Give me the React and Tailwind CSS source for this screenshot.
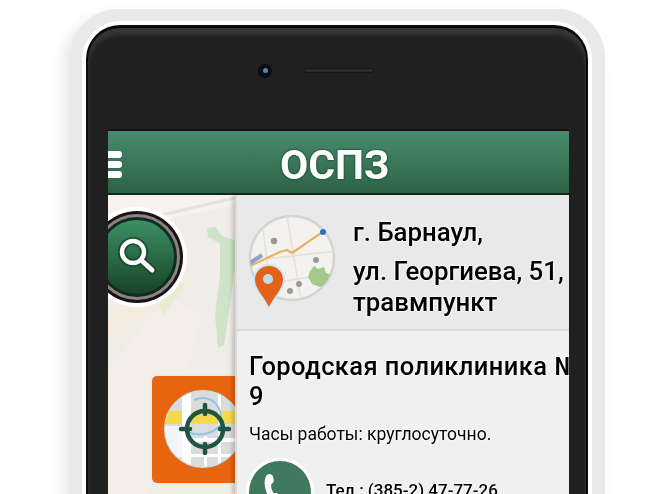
import React from "react";

const halo = "[text-shadow:0_0_2px_#fff,0_0_2px_#fff,0_0_3px_#fff]";

function MapBackground() {
  return (
    <svg className="absolute inset-0 w-full h-full" viewBox="0 0 127 299" preserveAspectRatio="none">
      <rect width="127" height="299" fill="#f0ece7" />
      <path d="M0 0H127V10L50 26H0Z" fill="#f6f3ef" />
      <path d="M45 22L127 3" stroke="#e2e4dd" strokeWidth="3" fill="none" />
      <path d="M60 50L72 58L60 105L30 125L0 150V120Z" fill="#f6ebe0" />
      <path d="M0 175L60 100L95 120L40 299H0Z" fill="#f5efe9" opacity="0.8" />
      <path d="M99 33L108 32L113 40L127 45V70L122 110L116 150L110 152L107 120L112 80L112 48L100 42Z" fill="#cfe3c8" />
      <path d="M50 110L70 85L78 90L56 120Z" fill="#e8ecd2" />
    </svg>
  );
}

function TargetTile() {
  return (
    <div className="absolute left-[44px] top-[181px] w-[100px] h-[107px] rounded-[5px] bg-[#e8650f] shadow-[0_0_2px_#bfe6f5]">
      <svg className="w-full h-full" viewBox="0 0 100 107">
        <defs>
          <clipPath id="tileclip"><circle cx="51" cy="53" r="38" /></clipPath>
        </defs>
        <circle cx="51" cy="53" r="40" fill="#f7650a" />
        <circle cx="51" cy="53" r="38" fill="#dcdcdc" stroke="#bfe6f5" strokeWidth="2" />
        <g clipPath="url(#tileclip)">
          <rect x="10" y="35" width="82" height="13" fill="#f4d94f" />
          <rect x="30" y="10" width="9" height="90" fill="#fff" />
          <rect x="10" y="62" width="82" height="4" fill="#fff" />
          <rect x="10" y="78" width="82" height="3" fill="#fff" />
          <rect x="52" y="60" width="3" height="40" fill="#fff" />
          <rect x="66" y="15" width="3" height="80" fill="#fff" />
          <rect x="12" y="50" width="18" height="30" fill="#f2f6fa" />
          <path d="M42 24C62 16 72 36 68 44" stroke="#8fc4e6" strokeWidth="2" fill="none" />
          <path d="M36 56C50 62 66 56 72 44" stroke="#8fc4e6" strokeWidth="2" fill="none" />
        </g>
        <g stroke="#1f5542" fill="none">
          <circle cx="53" cy="53" r="18" strokeWidth="4.5" />
          <path d="M53 29V38M53 68V77M29 53H38M68 53H77" strokeWidth="4.5" strokeLinecap="round" />
        </g>
      </svg>
    </div>
  );
}

function SearchButton() {
  return (
    <div className="absolute left-[-21px] top-[12px] w-[100px] h-[100px] rounded-full bg-white p-[4px]">
      <div className="w-full h-full rounded-full bg-[#1a1214] p-[3px]">
        <div className="w-full h-full rounded-full bg-[#8d8385] p-[3px]">
          <div className="w-full h-full rounded-full bg-gradient-to-b from-[#3c9064] via-[#2a6a46] to-[#184429] border-[3px] border-[#0f2c1e] flex items-center justify-center">
            <svg width="44" height="44" viewBox="0 0 44 44" className="mt-[-2px]">
              <circle cx="18" cy="18" r="11" fill="none" stroke="#0e3322" strokeWidth="8" opacity="0.6" />
              <path d="M26 26L37 36" stroke="#0e3322" strokeWidth="8" strokeLinecap="round" opacity="0.6" />
              <circle cx="18" cy="18" r="11" fill="none" stroke="#fff" strokeWidth="4.5" />
              <path d="M26 26L37 36" stroke="#fff" strokeWidth="5" strokeLinecap="round" />
            </svg>
          </div>
        </div>
      </div>
    </div>
  );
}

function MiniMap() {
  return (
    <svg width="96" height="100" viewBox="0 0 96 100" className="shrink-0">
      <defs>
        <clipPath id="miniclip"><circle cx="50" cy="47" r="42" /></clipPath>
      </defs>
      <circle cx="50" cy="47" r="42" fill="#f4f2ee" stroke="#d3d3d1" strokeWidth="2.5" />
      <g clipPath="url(#miniclip)">
        <path d="M20 10L30 90M45 5L60 95M5 50L95 40M10 75L95 62" stroke="#eadfd6" strokeWidth="1.5" fill="none" />
        <path d="M8 55L38 41L45 39L50 42L82 20L92 17" stroke="#e9b35a" strokeWidth="2.2" fill="none" />
        <path d="M8 52L20 44" stroke="#8aa3c8" strokeWidth="4" fill="none" />
        <path d="M68 60L72 55L76 58L82 56L84 62L90 64L86 72L78 76L70 73L66 66Z" fill="#a5c98a" />
      </g>
      <circle cx="81" cy="21" r="3" fill="#2a6fd0" />
      <circle cx="32" cy="30" r="3.2" fill="#9a9a9a" />
      <circle cx="74" cy="49" r="3" fill="#9a9a9a" />
      <circle cx="57" cy="73" r="3" fill="#9a9a9a" />
      <circle cx="48" cy="80" r="3" fill="#9a9a9a" />
      <path d="M27 98C23 90 11 79 11 69C11 59 18 53 27 53C36 53 43 59 43 69C43 79 31 90 27 98Z" fill="#bfe6f5" opacity="0.7" />
      <path d="M27 96C24 88 13 78 13 69C13 61 19 55 27 55C35 55 41 61 41 69C41 78 30 88 27 96Z" fill="#e2621a" />
      <circle cx="26" cy="68" r="5" fill="#bfdde6" />
    </svg>
  );
}

export default function App() {
  return (
    <div className="w-[652px] h-[494px] overflow-hidden bg-white pl-[70px] pt-[9px] [font-family:Roboto,'Noto_Sans',sans-serif]">
      <div className="w-[535px] h-[620px] rounded-[48px] bg-[#e9e9e9] pt-[12px] pl-[12px] pr-[13px] shadow-[-6px_6px_14px_rgba(0,0,0,0.1)] blur-[0.6px]">
        <div className="w-full h-full rounded-[38px] bg-white pt-[4px] px-[4px]">
          <div className="w-full h-full rounded-[34px] bg-[#202020] border-2 border-t-[3px] border-[#0a0a0a] shadow-[inset_0_7px_4px_#363636] pl-[20px] pr-[17px]">
            <div className="h-[101px] flex items-center pl-[150px] pb-[16px] gap-[32px]">
              <div className="w-[14px] h-[14px] rounded-full bg-[#0c0c10] flex items-center justify-center">
                <div className="w-[5px] h-[5px] rounded-full bg-[#3f8fc4]" />
              </div>
              <div className="w-[70px] h-[5px] rounded-full bg-[#2a2a2a] border border-[#161616]" />
            </div>
            <div className="h-[400px] border-t-[2px] border-[#1a1015] overflow-hidden">
              <div className="h-[62px] flex items-center bg-gradient-to-b from-[#4a8b6d] to-[#2d6345] border-b-[2px] border-[#0e2a1a] box-content">
                <div className="w-[14px] flex flex-col gap-[3px] mt-[4px]">
                  <div className="h-[7px] rounded-r-[3px] bg-white shadow-[0_0_1px_#0d3a5a]" />
                  <div className="h-[7px] rounded-r-[3px] bg-white shadow-[0_0_1px_#0d3a5a]" />
                  <div className="h-[7px] rounded-r-[3px] bg-white shadow-[0_0_1px_#0d3a5a]" />
                </div>
                <div className="ml-[158px] mt-[6px] text-[41px] leading-none font-bold text-white [text-shadow:0_0_2px_#0f4a2a,0_0_2px_#0f4a2a]">ОСПЗ</div>
              </div>
              <div className="flex h-[300px]">
                <div className="relative w-[127px] shrink-0 overflow-hidden">
                  <MapBackground />
                  <TargetTile />
                  <SearchButton />
                </div>
                <div className="relative flex-1 min-w-0 overflow-hidden bg-[#f0f0f0] shadow-[-3px_0_4px_rgba(0,0,0,0.18)] border-l-[2px] border-[#dcdad8] text-black">
                  <div className="h-[136px] bg-[#e9e9e9] border-b-[2px] border-[#d9d9d9] flex pl-[5px] pt-[16px] gap-[15px]">
                    <MiniMap />
                    <div className={`text-[25.8px] font-medium leading-[31px] whitespace-nowrap ${halo}`}>
                      <div className="mt-[6px] mb-[8px]">г. Барнаул,</div>
                      <div>ул. Георгиева, 51,</div>
                      <div>травмпункт</div>
                    </div>
                  </div>
                  <div className="pl-[12px] pt-[20px]">
                    <div className={`text-[25.5px] font-medium leading-[30px] whitespace-nowrap tracking-[0.4px] ${halo}`}>Городская поликлиника №</div>
                    <div className={`text-[25.5px] font-medium leading-[30px] ${halo}`}>9</div>
                    <div className={`mt-[13px] text-[17.5px] leading-[20px] whitespace-nowrap ${halo}`}>Часы работы: круглосуточно.</div>
                    <div className="mt-[17px] flex items-center gap-[15px]">
                      <div className="w-[62px] h-[62px] rounded-full bg-[#3f7a60] shadow-[0_0_0_3px_#fff] flex pt-[12px] pl-[14px] shrink-0">
                        <svg width="20" height="32" viewBox="0 0 24 38">
                          <path d="M5 2C8 0 11 1 12 4L13 9C13 11 11 12 10 13C9 16 11 22 13 24C15 24 17 23 18 25L21 30C22 32 20 34 17 35C11 36 5 28 3 19C1 12 2 5 5 2Z" fill="#fff" />
                        </svg>
                      </div>
                      <div className={`text-[17px] font-medium leading-[20px] whitespace-nowrap mb-[4px] ${halo}`}>Тел.: (385-2) 47-77-26</div>
                    </div>
                  </div>
                </div>
              </div>
            </div>
          </div>
        </div>
      </div>
    </div>
  );
}
